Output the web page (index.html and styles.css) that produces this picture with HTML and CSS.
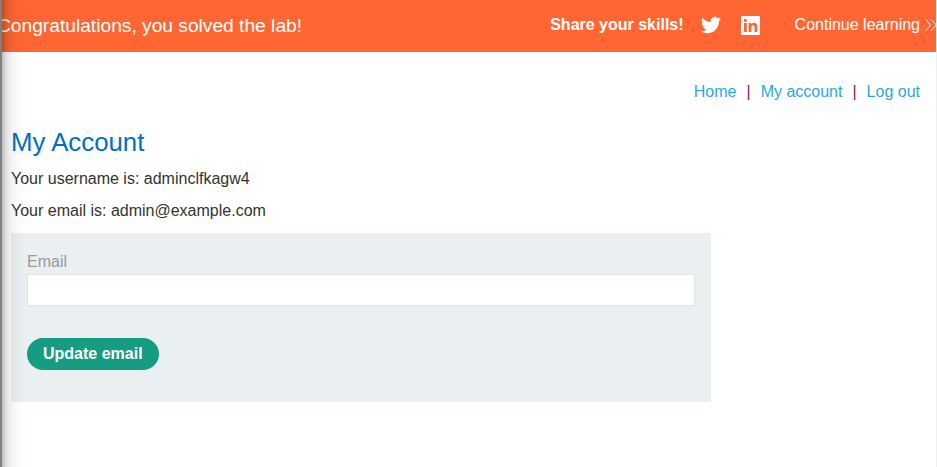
FILE: index.html
```
<!DOCTYPE html>
<html>
  <head>
    <title>My Account</title>
    <meta charset="UTF-8">
    <link rel="stylesheet" href="styles.css">
  </head>

  <body>
    <div class="notification">
      <p class="message">Congratulations, you solved the lab!</p>
      <div class="share">
        <span class="shareTitle">Share your skills!</span>
        <a class="twitter" href="#">
          <svg width="20" height="20" viewBox="0 0 24 24" fill="#fff">
            <path d="M23.954 4.569a10 10 0 0 1-2.825.775 4.958 4.958 0 0 0 2.163-2.723c-.951.555-2.005.959-3.127 1.184a4.92 4.92 0 0 0-8.384 4.482C7.691 8.094 4.066 6.13 1.64 3.161a4.822 4.822 0 0 0-.666 2.475c0 1.71.87 3.213 2.188 4.096a4.904 4.904 0 0 1-2.228-.616v.061a4.923 4.923 0 0 0 3.946 4.827 4.996 4.996 0 0 1-2.212.085 4.937 4.937 0 0 0 4.604 3.417 9.868 9.868 0 0 1-6.102 2.105c-.39 0-.779-.023-1.17-.067a13.995 13.995 0 0 0 7.557 2.209c9.054 0 13.999-7.496 13.999-13.986 0-.209 0-.42-.015-.63a9.936 9.936 0 0 0 2.46-2.548z"/>
          </svg>
        </a>
        <a class="linkedin" href="#">
          <svg width="19" height="19" viewBox="0 0 19 19">
            <rect width="19" height="19" rx="1.2" fill="#fff"/>
            <g fill="#ff6633">
              <circle cx="4.4" cy="4.4" r="1.6"/>
              <rect x="3" y="7" width="2.8" height="9"/>
              <path d="M7.6 7h2.7v1.3c.5-.9 1.5-1.5 2.7-1.5 2.7 0 3.3 1.8 3.3 4.2v5h-2.8v-4.4c0-1.1 0-2.4-1.5-2.4s-1.6 1.1-1.6 2.3V16H7.6z"/>
            </g>
          </svg>
        </a>
      </div>
      <a class="continue" href="#">Continue learning
        <svg width="12" height="14" viewBox="0 0 12 14" fill="none" stroke="#fff" stroke-width="0.9">
          <path d="M.5 1l5 6-5 6M6 1l5 6-5 6"/>
        </svg>
      </a>
    </div>

    <div class="container">
      <div class="topLinks">
        <a href="#">Home</a><span>|</span><a href="#">My account</a><span>|</span><a href="#">Log out</a>
      </div>
      <h1>My Account</h1>
      <p>Your username is: adminclfkagw4</p>
      <p>Your email is: admin@example.com</p>
      <form class="emailForm">
        <label for="email">Email</label>
        <input id="email" type="email">
        <button type="button">Update email</button>
      </form>
    </div>

    <div class="edgeShadow"></div>
    <div class="edgeLine"></div>
  </body>
</html>
```
FILE: styles.css
```
* { box-sizing: border-box; }
body {
  margin: 0;
  height: 467px;
  overflow: hidden;
  background-color: white;
  color: #333332;
  font-family: "Liberation Sans", Arial, sans-serif;
  font-size: 16px;
}
a {
  color: #29a9e0;
  text-decoration: none;
}
svg { display: block; }

.notification {
  display: flex;
  align-items: center;
  height: 52px;
  padding-bottom: 2px;
  background-color: #ff6633;
  color: white;
  white-space: nowrap;
}
.notification a { color: white; }
.message {
  flex: 1;
  margin: 0 0 0 -3px;
  padding-top: 2px;
  font-size: 19.2px;
}
.share {
  display: flex;
  align-items: center;
}
.shareTitle {
  font-weight: bold;
}
.twitter { margin-left: 17px; }
.linkedin {
  margin-left: 20px;
  padding-top: 1px;
}
.continue {
  display: flex;
  align-items: center;
  gap: 5px;
  margin-left: 35px;
}

.container { padding: 30px 17px 0 11px; }
.topLinks {
  text-align: right;
  line-height: 20px;
}
.topLinks span {
  margin: 0 10px;
  color: #86194f;
}
h1 {
  margin: 24px 0 11px;
  color: #0070c0;
  font-size: 25.8px;
  font-weight: normal;
  line-height: 32px;
}
.container p {
  margin: 0 0 12px;
  line-height: 20px;
}

.emailForm {
  width: 700px;
  height: 169px;
  padding: 18px 16px 0;
  background-color: #eaeff2;
}
.emailForm label {
  display: block;
  height: 23px;
  line-height: 21px;
  color: #999;
}
.emailForm input {
  display: block;
  width: 100%;
  height: 32px;
  border: 1px solid #e4e4e4;
  background-color: white;
}
.emailForm button {
  height: 32px;
  margin-top: 32px;
  padding: 0 16px;
  border: 0;
  border-radius: 16px;
  background-color: #169c80;
  color: white;
  font: bold 16px "Liberation Sans", Arial, sans-serif;
}

.edgeShadow {
  position: fixed;
  top: 0; left: 0; bottom: 0;
  width: 28px;
  border-left: 2px solid #808080;
  background: linear-gradient(to right, rgba(0, 0, 0, 0.26), rgba(0, 0, 0, 0.12) 4px, rgba(0, 0, 0, 0.05) 9px, rgba(0, 0, 0, 0.015) 16px, rgba(0, 0, 0, 0));
}
.edgeLine {
  position: fixed;
  top: 0; right: 0; bottom: 0;
  width: 1px;
  background-color: #f0f0f0;
}
```
